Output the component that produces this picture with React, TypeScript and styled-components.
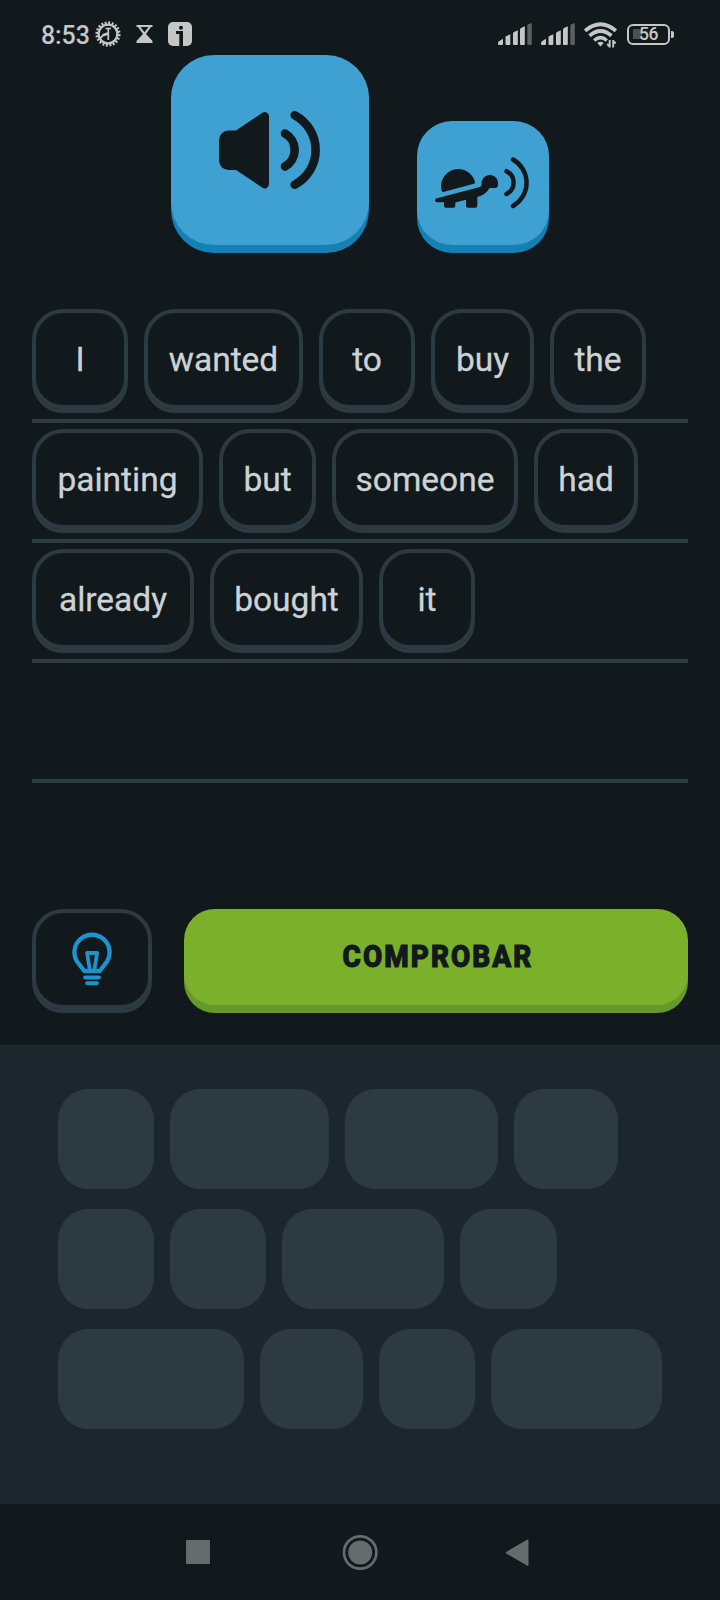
import React from 'react';
import styled, { createGlobalStyle } from 'styled-components';

const c = {
  bg: '#11191c',
  line: '#2d3a42',
  blue: '#3fa0d2',
  blueLip: '#1580b4',
  green: '#7bb02a',
  greenLip: '#66982a',
  tray: '#1c272d',
  text: '#cdd2d5',
  status: '#c5c7c7',
  nav: '#666b6d',
  hint: '#1d93cf',
};

const GlobalStyle = createGlobalStyle`
  * { box-sizing: border-box; }
  body { margin: 0; background: ${c.bg}; }
  button { font: inherit; border: 0; padding: 0; margin: 0; background: none; }
`;

const Screen = styled.main`
  display: flex;
  flex-direction: column;
  width: 720px;
  height: 1600px;
  overflow: hidden;
  background: ${c.bg};
  font-family: Roboto, 'Liberation Sans', sans-serif;
`;

const StatusBar = styled.header`
  display: flex;
  justify-content: space-between;
  height: 55px;
  padding: 15px 46px 0 41px;
  color: ${c.status};
`;

const StatusGroup = styled.div`
  display: flex;
  align-items: center;
  height: 38px;
`;

const Clock = styled.span`
  width: 54px;
  padding-top: 3px;
  font-size: 25px;
  font-weight: 500;
  line-height: 38px;
  letter-spacing: -0.1px;
  white-space: nowrap;
`;

const StatusIcon = styled.svg<{ $gap?: number }>`
  display: block;
  flex: none;
  margin-left: ${(p) => p.$gap ?? 0}px;
`;

const Battery = styled.div`
  display: flex;
  align-items: center;
  margin-left: 10px;
`;

const BatteryBody = styled.div`
  display: flex;
  align-items: center;
  justify-content: center;
  width: 43px;
  height: 21px;
  border: 2.5px solid ${c.status};
  border-radius: 6px;
  background: linear-gradient(#4a5053, #4a5053) 4px center / 9px 10px no-repeat;
  font-size: 17.5px;
  font-weight: 500;
  line-height: 17px;
  letter-spacing: -0.4px;
`;

const BatteryTip = styled.div`
  width: 3px;
  height: 7px;
  margin-left: 1px;
  border-radius: 0 2px 2px 0;
  background: ${c.status};
`;

const AudioRow = styled.section`
  display: flex;
  justify-content: center;
  align-items: flex-end;
  gap: 48px;
  height: 198px;
`;

const AudioButton = styled.button<{ $size: number; $radius: number }>`
  display: flex;
  align-items: center;
  justify-content: center;
  width: ${(p) => p.$size}px;
  height: ${(p) => p.$size - 8}px;
  margin-bottom: 8px;
  border-radius: ${(p) => p.$radius}px;
  background: ${c.blue};
  box-shadow: 0 8px 0 ${c.blueLip};
`;

const Answer = styled.section`
  display: flex;
  flex-direction: column;
  margin: 50px 32px 0;
`;

const AnswerLine = styled.div`
  display: flex;
  gap: 16px;
  height: 120px;
  padding-top: 6px;
  border-bottom: 4px solid ${c.line};
`;

const Word = styled.button<{ $width: number }>`
  display: flex;
  align-items: center;
  justify-content: center;
  width: ${(p) => p.$width}px;
  height: 100px;
  padding-top: 1px;
  border: 4px solid ${c.line};
  border-radius: 31px;
  box-shadow: 0 4px 0 ${c.line};
  color: ${c.text};
  font-size: 33.5px;
  line-height: 40px;
  white-space: nowrap;
  -webkit-text-stroke: 0.3px ${c.text};
`;

const Actions = styled.section`
  display: flex;
  gap: 32px;
  margin: 126px 32px 0;
  height: 136px;
`;

const HintButton = styled.button`
  display: flex;
  align-items: center;
  justify-content: center;
  width: 120px;
  height: 100px;
  padding-right: 1px;
  border: 4px solid ${c.line};
  border-radius: 31px;
  box-shadow: 0 4px 0 ${c.line};
`;

const CheckButton = styled.button`
  display: flex;
  align-items: center;
  justify-content: center;
  flex: 1;
  height: 96px;
  padding: 0 0 1px 4px;
  border-radius: 31px;
  background: ${c.green};
  box-shadow: 0 8px 0 ${c.greenLip};
  color: ${c.bg};
`;

const CheckLabel = styled.span`
  display: block;
  font-size: 31px;
  font-weight: 800;
  line-height: 38px;
  letter-spacing: 2.3px;
  transform: scaleX(0.9);
  -webkit-text-stroke: 1.2px ${c.bg};
`;

const Tray = styled.section`
  display: flex;
  flex-direction: column;
  gap: 20px;
  height: 459px;
  padding: 44px 58px 0;
  background: ${c.tray};
`;

const TrayRow = styled.div`
  display: flex;
  gap: 16px;
`;

const Slot = styled.div<{ $width: number }>`
  width: ${(p) => p.$width}px;
  height: 100px;
  border-radius: 31px;
  background: ${c.line};
`;

const NavBar = styled.nav`
  display: flex;
  align-items: center;
  justify-content: center;
  gap: 126px;
  height: 96px;
  background: ${c.bg};
`;

const answerLines: [string, number][][] = [
  [['I', 96], ['wanted', 159], ['to', 96], ['buy', 103], ['the', 96]],
  [['painting', 171], ['but', 97], ['someone', 186], ['had', 104]],
  [['already', 162], ['bought', 153], ['it', 96]],
  [],
];

const traySlots = [
  [96, 159, 153, 104],
  [96, 96, 162, 97],
  [186, 103, 96, 171],
];

const teeth = Array.from({ length: 20 }, (_, i) => i * 18 + 6);

const GearIcon = () => (
  <StatusIcon width="26" height="26" viewBox="-13 -13 26 26" fill="none" stroke={c.status}>
    <circle r="9.4" strokeWidth="2.3" />
    {teeth.map((a) => (
      <path key={a} d="M0-10V-12.6" strokeWidth="2" transform={`rotate(${a})`} />
    ))}
    <path d="M-2.5-5.5H3M.3-5.5V6" strokeWidth="1.7" />
    <path d="M-9 4.5L-5-.3L1-2.2L.5 1L-4.5 2.2L-8 6Z" fill={c.status} stroke="none" />
  </StatusIcon>
);

const HourglassIcon = () => (
  <StatusIcon $gap={15} width="17" height="18" viewBox="0 0 17 18">
    <path d="M.5 0H16.5V2H15L10 9L16.5 16V18H.5V16L7 9L2 2H.5Z" fill={c.status} />
    <path d="M4.5 2H12.5L8.500 7.300Z" fill={c.bg} />
  </StatusIcon>
);

const InfoIcon = () => (
  <StatusIcon $gap={15} width="24" height="24" viewBox="0 0 24 24">
    <rect width="24" height="24" rx="5" fill={c.status} />
    <circle cx="13" cy="5.8" r="2" fill={c.bg} />
    <path d="M8 9H15V24H11.3V12H8Z" fill={c.bg} />
  </StatusIcon>
);

const SignalIcon = ({ gap }: { gap?: number }) => (
  <StatusIcon $gap={gap} width="34" height="23" viewBox="0 0 34 23" fill={c.status}>
    <path d="M0 19.5Q0 19 1 18.3L5 15.8V21Q5 22 4 22H1Q0 22 0 21Z" />
    <path d="M7.5 14Q7.5 13.5 8.5 13L12.3 11.3V21Q12.3 22 11.3 22H8.5Q7.5 22 7.5 21Z" />
    <path d="M15 10.5Q15 9.5 16 9L19.8 7.3V21Q19.8 22 18.8 22H16Q15 22 15 21Z" />
    <path d="M22 6.5Q22 5.5 23 5L26.8 3.3V21Q26.8 22 25.8 22H23Q22 22 22 21Z" />
    <path d="M29.3 2.5Q29.3 1.6 30.3 1.2L33.8 0V21Q33.8 22 32.8 22H30.3Q29.3 22 29.3 21Z" fill="#5b6062" />
  </StatusIcon>
);

const WifiIcon = () => (
  <StatusIcon $gap={9} width="33" height="27" viewBox="0 0 33 27" fill="none" stroke={c.status}>
    <path d="M1 9.8Q16.5-3.3 32 9.8" strokeWidth="3.8" />
    <path d="M5.6 14.7Q16.5 5.3 27.4 14.7" strokeWidth="3.8" />
    <path d="M10.2 19.5Q16.5 13.9 22.8 19.5" strokeWidth="3.6" />
    <path d="M13.3 22Q16.5 19.3 19.7 22L16.5 25.6Z" fill={c.status} stroke="none" />
    <path d="M25.7 19V26.5M29.2 19V26.5M23.2 23L25.7 25.5M31.7 22.5L29.2 20" strokeWidth="1.9" />
  </StatusIcon>
);

const SpeakerIcon = () => (
  <svg width="102" height="80" viewBox="219 110.5 102 80">
    <path
      d="M228.5 131H236L262.5 113.200A4.200 4.200 0 0 1 269 116.500V184.800A4.200 4.200 0 0 1 262.500 188.200L236 170.500H228.500A9.500 9.500 0 0 1 219 161V140.500A9.500 9.500 0 0 1 228.500 131Z"
      fill={c.bg}
    />
    <path
      d="M285 134A18.9 18.9 0 0 1 285 167M294.7 115.8A39.2 39.2 0 0 1 294.7 185.2"
      fill="none"
      stroke={c.bg}
      strokeWidth="8.6"
      strokeLinecap="round"
    />
  </svg>
);

const TurtleIcon = () => (
  <svg width="96" height="54" viewBox="435 156 96 54">
    <path
      d="M443.3 192Q442 192 441.6 190.500A17.200 17.200 0 1 1 475 182Q475.300 183.400 473.900 183.800Z"
      fill={c.bg}
    />
    <path
      d="M437 198.2L480 187Q482 186.2 481.5 183A8.3 8.3 0 0 1 498 182V184.500A3.500 3.500 0 0 1 494.500 188H489.500Q486 194.500 477.300 197V205.700A2 2 0 0 1 475.300 207.700H468A2 2 0 0 1 466 205.700V199.700L455.300 202.400V205.700A2 2 0 0 1 453.300 207.700H446A2 2 0 0 1 444 205.700V202.300H437.500A2 2 0 0 1 437 198.200Z"
      fill={c.bg}
    />
    <path
      d="M506.5 171.2A12.7 12.7 0 0 1 506.5 194M513 159.5A26.7 26.7 0 0 1 513 206"
      fill="none"
      stroke={c.bg}
      strokeWidth="4.5"
      strokeLinecap="round"
    />
  </svg>
);

const BulbIcon = () => (
  <svg
    width="40"
    height="54"
    viewBox="71.7 932 40 54"
    fill="none"
    stroke={c.hint}
    strokeWidth="4.3"
    strokeLinecap="round"
    strokeLinejoin="round"
  >
    <path d="M84 971L76.5 961.2A17.6 17.6 0 1 1 106.9 961.2L99.5 971Z" />
    <path d="M89.5 970L86.8 953H96.8L94 970" strokeWidth="3.8" />
    <path d="M84.8 977.5H98.6M86.8 983.3H96.6" strokeWidth="4" />
  </svg>
);

export default function App() {
  return (
    <Screen>
      <GlobalStyle />
      <StatusBar>
        <StatusGroup>
          <Clock>8:53</Clock>
          <GearIcon />
          <HourglassIcon />
          <InfoIcon />
        </StatusGroup>
        <StatusGroup>
          <SignalIcon />
          <SignalIcon gap={9} />
          <WifiIcon />
          <Battery>
            <BatteryBody>56</BatteryBody>
            <BatteryTip />
          </Battery>
        </StatusGroup>
      </StatusBar>

      <AudioRow>
        <AudioButton $size={198} $radius={43} aria-label="Escuchar">
          <SpeakerIcon />
        </AudioButton>
        <AudioButton $size={132} $radius={35} aria-label="Escuchar despacio">
          <TurtleIcon />
        </AudioButton>
      </AudioRow>

      <Answer>
        {answerLines.map((line, i) => (
          <AnswerLine key={i}>
            {line.map(([word, width]) => (
              <Word key={word} $width={width}>{word}</Word>
            ))}
          </AnswerLine>
        ))}
      </Answer>

      <Actions>
        <HintButton aria-label="Pista">
          <BulbIcon />
        </HintButton>
        <CheckButton>
          <CheckLabel>COMPROBAR</CheckLabel>
        </CheckButton>
      </Actions>

      <Tray>
        {traySlots.map((row, i) => (
          <TrayRow key={i}>
            {row.map((width, j) => (
              <Slot key={j} $width={width} />
            ))}
          </TrayRow>
        ))}
      </Tray>

      <NavBar>
        <svg width="36" height="36" viewBox="0 0 36 36" fill={c.nav}>
          <rect x="6" y="6" width="24" height="24" rx="1" />
        </svg>
        <svg width="36" height="36" viewBox="0 0 36 36" fill={c.nav}>
          <circle cx="18.2" cy="18.5" r="12" />
          <circle cx="18.2" cy="18.5" r="16.2" fill="none" stroke={c.nav} strokeWidth="2.7" />
        </svg>
        <svg width="36" height="36" viewBox="0 0 36 36" fill={c.nav}>
          <path d="M2.5 17.7L23 5.8Q24.5 5 24.5 6.8V30.7Q24.5 32.5 23 31.6L2.5 19.7Q1 18.7 2.5 17.7Z" />
        </svg>
      </NavBar>
    </Screen>
  );
}
